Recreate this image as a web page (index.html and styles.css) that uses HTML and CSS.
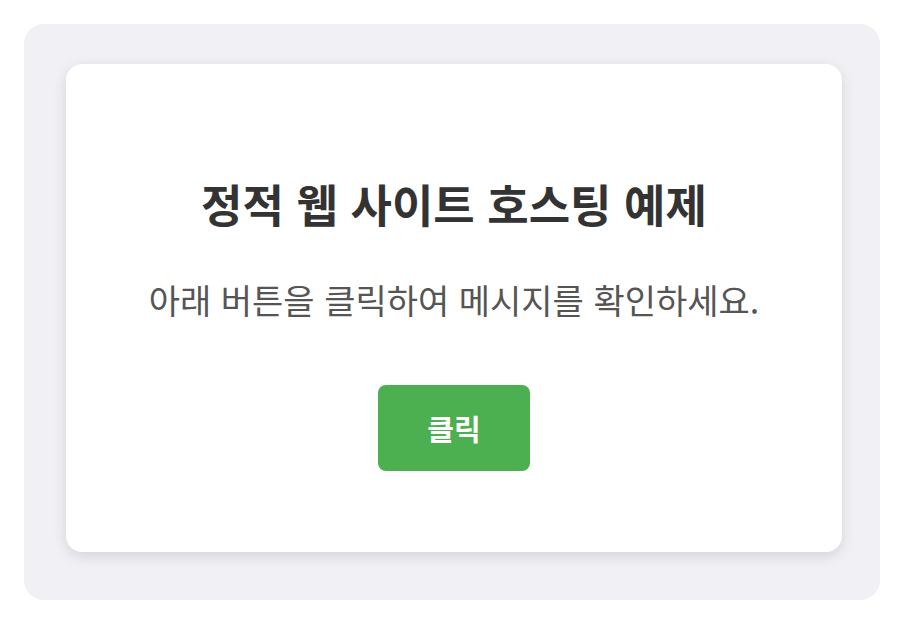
FILE: index.html
```html
<!DOCTYPE html>
<html lang="ko">
<head>
  <meta charset="UTF-8" />
  <meta name="viewport" content="width=device-width, initial-scale=1.0"/>
  <title>정적 웹 사이트 호스팅 예제</title>
  <link rel="stylesheet" href="styles.css">
</head>
<body>
  <div class="wrapper">
    <div class="card">
      <h1>정적 웹 사이트 호스팅 예제</h1>
      <p>아래 버튼을 클릭하여 메시지를 확인하세요.</p>
      <button type="button" id="click-btn">클릭</button>
    </div>
  </div>

  <script>
    document.getElementById("click-btn").addEventListener("click", function () {
      alert("안녕하세요! 정적 웹 사이트입니다.");
    });
  </script>
</body>
</html>
```

FILE: styles.css
```css
body {
  font-family: "Noto Sans CJK KR", "Noto Sans", sans-serif;
  background-color: #ffffff;
  margin: 0;
  padding: 24px;
}

.wrapper {
  background: #f0f0f5;
  border-radius: 20px;
  padding: 40px 38px 48px 42px;
}

.card {
  background: #ffffff;
  border-radius: 16px;
  box-shadow: 0 4px 14px rgba(0, 0, 0, 0.12);
  height: 488px;
  padding-top: 107px;
  box-sizing: border-box;
  display: flex;
  flex-direction: column;
  align-items: center;
  text-align: center;
}

h1 {
  font-size: 45px;
  line-height: 65px;
  font-weight: bold;
  color: #333333;
  margin: 0 0 39px;
}

p {
  font-size: 34px;
  line-height: 49px;
  color: #555555;
  margin: 0 0 61px;
}

button {
  background-color: #4caf50;
  color: #ffffff;
  border: none;
  border-radius: 8px;
  width: 152px;
  height: 86px;
  font-family: inherit;
  font-size: 29px;
  font-weight: bold;
  cursor: pointer;
}

button:hover {
  background-color: #45a049;
}
```
